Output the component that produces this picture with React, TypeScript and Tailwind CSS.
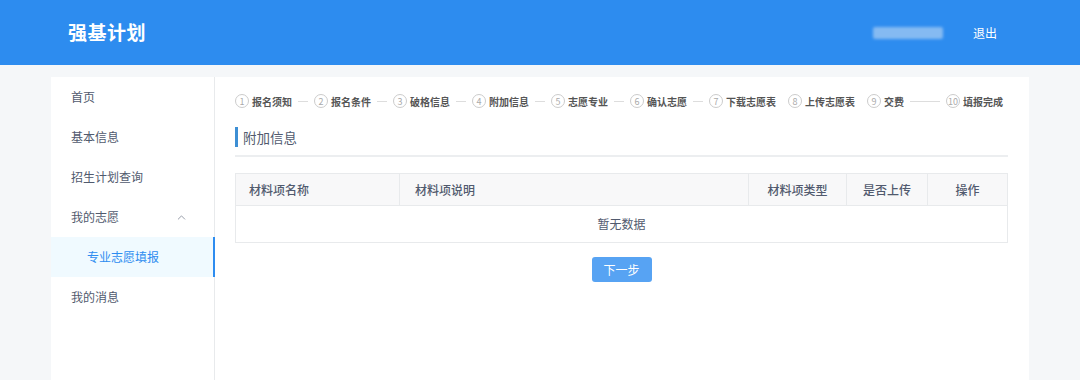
import { ChevronUp } from 'lucide-react';

const steps = [
  '报名须知',
  '报名条件',
  '破格信息',
  '附加信息',
  '志愿专业',
  '确认志愿',
  '下载志愿表',
  '上传志愿表',
  '交费',
  '填报完成',
];

const menu = [
  { label: '首页' },
  { label: '基本信息' },
  { label: '招生计划查询' },
  { label: '我的志愿', open: true },
  { label: '专业志愿填报', sub: true, active: true },
  { label: '我的消息' },
];

export default function App() {
  return (
    <div
      className="min-h-[380px] bg-[#f5f7f9] text-[#515a6e]"
      style={{ fontFamily: '"Noto Sans CJK SC", "Noto Sans", sans-serif' }}
    >
      {/* 顶部栏 */}
      <header className="h-[65px] bg-[#2d8cef]">
        <div className="mx-auto flex h-full w-[978px] items-center pl-[17px] pr-[32px]">
          <h1 className="text-[19px] font-bold tracking-[0.5px] text-white">强基计划</h1>
          <div className="ml-auto flex items-center">
            <div className="h-[12px] w-[70px] rounded-[2px] bg-[#9cc6f3] opacity-80 blur-[1.5px]" />
            <button className="ml-[30px] text-[12px] text-white">退出</button>
          </div>
        </div>
      </header>

      <div className="mx-auto mt-[12px] flex w-[978px]">
        {/* 侧边菜单 */}
        <aside className="h-[303px] w-[164px] shrink-0 border-r border-[#e8eaec] bg-white">
          {menu.map((m) => (
            <div
              key={m.label}
              className={
                m.active
                  ? 'relative flex h-[40px] items-center bg-[#f0faff] pl-[36px] text-[12px] text-[#2d8cf0]'
                  : 'flex h-[40px] items-center pl-[20px] pr-[26px] text-[12px] text-[#515a6e]'
              }
            >
              <span>{m.label}</span>
              {m.open && <ChevronUp className="ml-auto h-[13px] w-[13px] text-[#808695]" strokeWidth={1.5} />}
              {m.active && <span className="absolute right-[-1px] top-0 h-full w-[2px] bg-[#2d8cf0]" />}
            </div>
          ))}
        </aside>

        {/* 主内容 */}
        <main className="h-[303px] flex-1 bg-white pl-[20px] pr-[21px] pt-[16px]">
          {/* 步骤条 */}
          <div className="flex h-[16px] items-center">
            {steps.map((s, i) => (
              <div
                key={s}
                className={i === steps.length - 1 ? 'flex items-center' : 'flex w-[79px] items-center pr-[6px]'}
              >
                <span className="flex h-[14px] w-[14px] shrink-0 items-center justify-center rounded-full border border-[#ccc] text-[9px] leading-none text-[#aaa]">
                  {i + 1}
                </span>
                <span className="ml-[3px] whitespace-nowrap text-[10px] font-bold text-[#555]">{s}</span>
                {i < steps.length - 1 && <span className="ml-[6px] h-px flex-1 bg-[#ddd]" />}
              </div>
            ))}
          </div>

          {/* 标题 */}
          <div className="mt-[18px] border-b-2 border-[#eceef0] pb-[8px]">
            <div className="flex h-[20px] items-center border-l-[3px] border-[#3d8fd4] pl-[5px] text-[13.5px] text-[#515a6e]">
              附加信息
            </div>
          </div>

          {/* 表格 */}
          <div className="mt-[16px] border border-[#e8eaec] text-[12px]">
            <div className="grid h-[31px] grid-cols-[164px_349px_98px_81px_1fr] bg-[#f8f8f9] font-medium text-[#515a6e]">
              <div className="flex items-center border-r border-[#e8eaec] pl-[13px]">材料项名称</div>
              <div className="flex items-center border-r border-[#e8eaec] pl-[15px]">材料项说明</div>
              <div className="flex items-center justify-center border-r border-[#e8eaec]">材料项类型</div>
              <div className="flex items-center justify-center border-r border-[#e8eaec]">是否上传</div>
              <div className="flex items-center justify-center">操作</div>
            </div>
            <div className="flex h-[37px] items-center justify-center border-t border-[#e8eaec] text-[#515a6e]">
              暂无数据
            </div>
          </div>

          <div className="mt-[14px] flex justify-center">
            <button className="h-[25px] w-[60px] rounded-[3px] bg-[#57a3f3] text-[12px] text-white">下一步</button>
          </div>
        </main>
      </div>
    </div>
  );
}
